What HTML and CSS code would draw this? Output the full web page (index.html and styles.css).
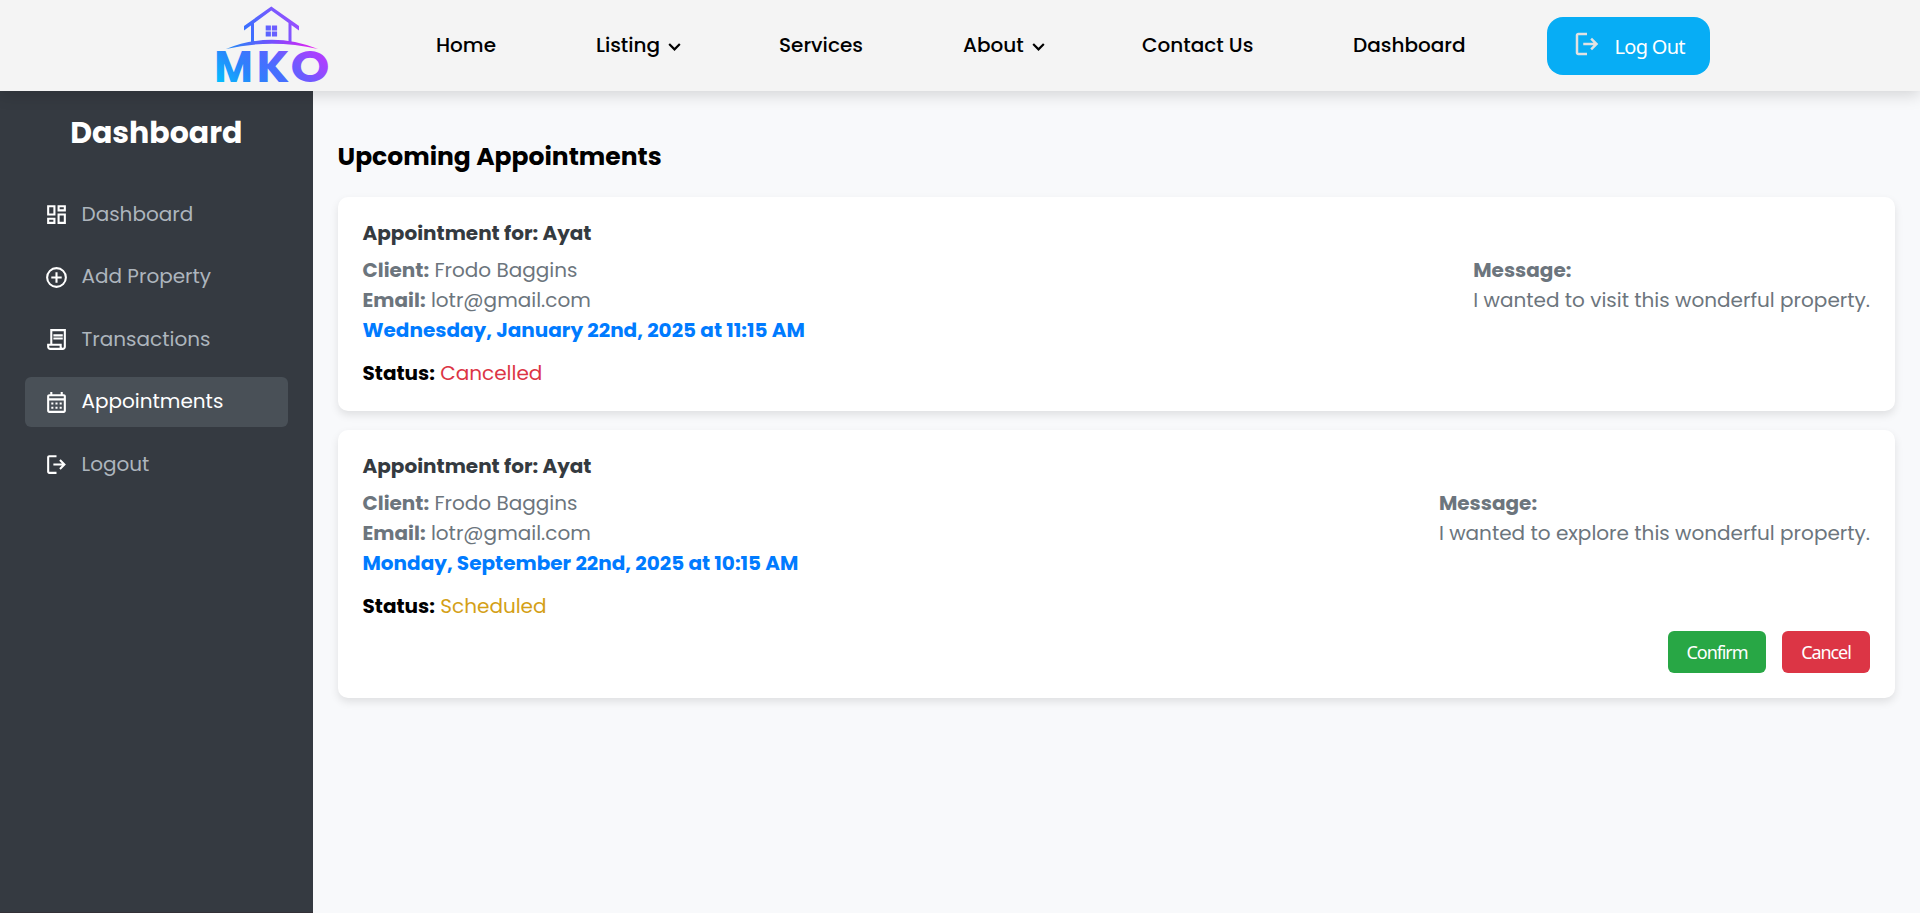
FILE: index.html
```html
<!DOCTYPE html>
<html lang="en">
<head>
<meta charset="utf-8">
<title>Appointments</title>
<link rel="stylesheet" href="styles.css">
</head>
<body>
<header class="header">
  <svg class="logo" viewBox="210 -12 124 115" width="124" height="115">
    <defs>
      <linearGradient id="letters" gradientUnits="userSpaceOnUse" x1="217" y1="84" x2="284" y2="17">
        <stop offset="0" stop-color="#00c4ff"/>
        <stop offset=".3" stop-color="#2a84fb"/>
        <stop offset=".55" stop-color="#4a6cff"/>
        <stop offset="1" stop-color="#b23cff"/>
      </linearGradient>
      <linearGradient id="arc" gradientUnits="userSpaceOnUse" x1="226" y1="0" x2="318" y2="0">
        <stop offset="0" stop-color="#1f8cf5"/>
        <stop offset=".5" stop-color="#7450ff"/>
        <stop offset="1" stop-color="#f01cf0"/>
      </linearGradient>
      <linearGradient id="house" gradientUnits="userSpaceOnUse" x1="246" y1="40" x2="294" y2="16">
        <stop offset="0" stop-color="#2f74ff"/>
        <stop offset="1" stop-color="#9a4dff"/>
      </linearGradient>
    </defs>
    <path fill="url(#house)" d="M271.3 6.5 299 26v4.5L271.3 10.6 244 30.500V26zM251 23.500l3-2V42h-3zM288.500 21.500l3 2V42h-3zM265.700 25.500h5.200v5h-5.200zm6.200 0h5.200v5h-5.200zm-6.200 6h5.200v5h-5.200zm6.200 0h5.200v5h-5.200z"/>
    <path fill="url(#arc)" d="M226 49q46-18.500 92 0-46-10.500-92 0z"/>
    <text class="logo-text" y="82" fill="url(#letters)"><tspan x="214.300" textLength="38.500" lengthAdjust="spacingAndGlyphs">M</tspan><tspan x="256.500" textLength="33" lengthAdjust="spacingAndGlyphs">K</tspan><tspan x="290.500" textLength="39" lengthAdjust="spacingAndGlyphs">O</tspan></text>
  </svg>
  <nav class="nav">
    <a class="nav-home">Home</a>
    <a class="nav-listing">Listing<svg class="chevron" viewBox="6 9 12 8"><path d="M16.293 9.293 12 13.586 7.707 9.293l-1.414 1.414L12 16.414l5.707-5.707z"/></svg></a>
    <a class="nav-services">Services</a>
    <a class="nav-about">About<svg class="chevron" viewBox="6 9 12 8"><path d="M16.293 9.293 12 13.586 7.707 9.293l-1.414 1.414L12 16.414l5.707-5.707z"/></svg></a>
    <a class="nav-contact">Contact Us</a>
    <a class="nav-dashboard">Dashboard</a>
  </nav>
  <button class="logout-button">
    <svg viewBox="0 0 24 24" width="30" height="30"><path d="M5 21q-.825 0-1.412-.587T3 19V5q0-.825.588-1.412T5 3h7v2H5v14h7v2zm11-4l-1.375-1.450 2.550-2.550H9v-2h8.175l-2.550-2.550L16 7l5 5z"/></svg>
    <span>Log Out</span>
  </button>
</header>
<div class="layout">
  <aside class="sidebar">
    <h1 class="sidebar-title">Dashboard</h1>
    <ul class="menu">
      <li class="menu-item"><svg viewBox="0 0 24 24"><path d="M19 5v2h-4V5h4M9 5v6H5V5h4m10 8v6h-4v-6h4M9 17v2H5v-2h4M21 3h-8v6h8V3zM11 3H3v10h8V3zm10 8h-8v10h8V11zm-10 4H3v6h8v-6z"/></svg><span>Dashboard</span></li>
      <li class="menu-item"><svg viewBox="0 0 24 24"><path d="M11 17h2v-4h4v-2h-4V7h-2v4H7v2h4zm1 5a10 10 0 1 1 0-20 10 10 0 0 1 0 20zm0-2a8 8 0 1 0 0-16 8 8 0 0 0 0 16z"/></svg><span>Add Property</span></li>
      <li class="menu-item"><svg viewBox="0 0 24 24"><path d="M6 22q-1.250 0-2.125-.875T3 19v-3h3V2h15v17q0 1.250-.875 2.125T18 22zm12-2q.425 0 .713-.288T19 19V4H8v12h9v3q0 .425.288.713T18 20M9 9V7h9v2zm0 3v-2h9v2zM6 20h9v-2H5v1q0 .425.288.713T6 20"/></svg><span>Transactions</span></li>
      <li class="menu-item active"><svg viewBox="0 0 24 24"><path d="M5 22q-.825 0-1.412-.587T3 20V6q0-.825.588-1.412T5 4h1V2h2v2h8V2h2v2h1q.825 0 1.413.588T21 6v14q0 .825-.587 1.413T19 22zm0-2h14V10H5zM5 8h14V6H5zM7 12h2v2H7zm4 0h2v2h-2zm4 0h2v2h-2zM7 16h2v2H7zm4 0h2v2h-2zm4 0h2v2h-2z"/></svg><span>Appointments</span></li>
      <li class="menu-item"><svg viewBox="0 0 24 24"><path d="M5 21q-.825 0-1.412-.587T3 19V5q0-.825.588-1.412T5 3h7v2H5v14h7v2zm11-4l-1.375-1.450 2.550-2.550H9v-2h8.175l-2.550-2.550L16 7l5 5z"/></svg><span>Logout</span></li>
    </ul>
  </aside>
  <main class="content">
    <h2 class="content-title">Upcoming Appointments</h2>
    <article class="card">
      <h3 class="card-title">Appointment for: Ayat</h3>
      <div class="card-body">
        <div>
          <p><strong>Client:</strong> Frodo Baggins</p>
          <p><strong>Email:</strong> lotr@gmail.com</p>
          <p class="date">Wednesday, January 22nd, 2025 at 11:15 AM</p>
        </div>
        <div><strong>Message:</strong><p>I wanted to visit this wonderful property.</p></div>
      </div>
      <p class="status"><strong>Status:</strong> <span class="cancelled">Cancelled</span></p>
    </article>
    <article class="card">
      <h3 class="card-title">Appointment for: Ayat</h3>
      <div class="card-body">
        <div>
          <p><strong>Client:</strong> Frodo Baggins</p>
          <p><strong>Email:</strong> lotr@gmail.com</p>
          <p class="date">Monday, September 22nd, 2025 at 10:15 AM</p>
        </div>
        <div><strong>Message:</strong><p>I wanted to explore this wonderful property.</p></div>
      </div>
      <p class="status"><strong>Status:</strong> <span class="scheduled">Scheduled</span></p>
      <div class="actions">
        <button class="confirm">Confirm</button>
        <button class="cancel">Cancel</button>
      </div>
    </article>
  </main>
</div>
</body>
</html>
```
FILE: styles.css
```css
* {
  box-sizing: border-box;
  margin: 0;
  padding: 0;
}

body {
  display: flex;
  flex-direction: column;
  height: 100vh;
  overflow: hidden;
  font-family: Poppins, Inter, sans-serif;
  font-size: 20px;
  line-height: 30px;
  background: #f8f9fb;
  color: #000;
}

button {
  border: 0;
  color: #fff;
  font-family: "Noto Sans", sans-serif;
  white-space: nowrap;
}

/* Header */
.header {
  position: relative;
  z-index: 1;
  display: flex;
  flex: none;
  align-items: center;
  height: 91px;
  padding-left: 210px;
  background: #f4f4f4;
  box-shadow: 0 4px 15px rgba(0, 0, 0, .15);
}

.logo {
  flex: none;
  margin-right: 102px;
}

.logo-text {
  font-family: Poppins, Inter, sans-serif;
  font-size: 44px;
  font-weight: 700;
}

.nav {
  display: flex;
  gap: 98px;
  padding-bottom: 1px;
  font-weight: 500;
  white-space: nowrap;
}

.nav a {
  display: flex;
  align-items: center;
}

.nav-home { width: 62px; }
.nav-listing { width: 85px; }
.nav-services { width: 86px; }
.nav-about { width: 81px; }
.nav-contact { width: 113px; }
.nav-dashboard { width: 113px; }

.chevron {
  flex: none;
  width: 13px;
  height: 8.500px;
  margin: 5px 0 0 8px;
}

.logout-button {
  display: flex;
  align-items: center;
  width: 163px;
  height: 58px;
  margin-left: 81px;
  padding-left: 25px;
  border-radius: 16px;
  background: #07adf5;
  font-size: 20px;
  line-height: 30px;
  letter-spacing: -.7px;
}

.logout-button svg {
  margin: 0 12.500px 4px 0;
  fill: #e2e2e2;
}

.logout-button span { padding-top: 2px; }

/* Sidebar */
.layout {
  display: flex;
  flex: 1;
}

.sidebar {
  width: 312.500px;
  padding: 24px 25px 0;
  border-bottom: 1px solid #333036;
  background: #353a41;
}

.sidebar-title {
  margin-bottom: 38.500px;
  color: #fff;
  font-size: 30px;
  line-height: 36px;
  text-align: center;
}

.menu {
  display: flex;
  flex-direction: column;
  gap: 12.500px;
  list-style: none;
}

.menu-item {
  display: flex;
  align-items: center;
  gap: 12.500px;
  height: 50px;
  padding-left: 19px;
  border-radius: 6px;
  color: #adb5bd;
}

.menu-item svg {
  width: 25px;
  height: 25px;
  fill: #fff;
}

.menu-item span { padding-bottom: 2px; }

.menu-item.active {
  background: #495057;
  color: #fff;
}

/* Appointments */
.content {
  flex: 1;
  padding: 51px 25px 0;
}

.content-title {
  margin-bottom: 25px;
  font-size: 25px;
}

.card {
  margin-bottom: 19px;
  padding: 21px 25px 23.500px;
  border-radius: 10px;
  background: #fff;
  box-shadow: 0 4px 8px rgba(0, 0, 0, .1);
}

.card-title {
  margin-bottom: 7px;
  color: #343a40;
  font-size: 20px;
}

.card-body {
  display: flex;
  justify-content: space-between;
  color: #6c757d;
}

.date {
  color: #007bff;
  font-weight: 700;
}

.status { margin-top: 12.500px; }
.cancelled { color: #dc3545; }
.scheduled { color: #d4a017; }

.actions {
  display: flex;
  justify-content: flex-end;
  gap: 16px;
  margin: 10.500px 0 1.500px;
}

.actions button {
  height: 42px;
  border-radius: 6px;
  font-family: "Noto Sans", sans-serif;
  font-size: 18px;
  letter-spacing: -1.100px;
}

.confirm {
  width: 98px;
  background: #28a745;
}

.cancel {
  width: 88px;
  background: #dc3545;
}
```
